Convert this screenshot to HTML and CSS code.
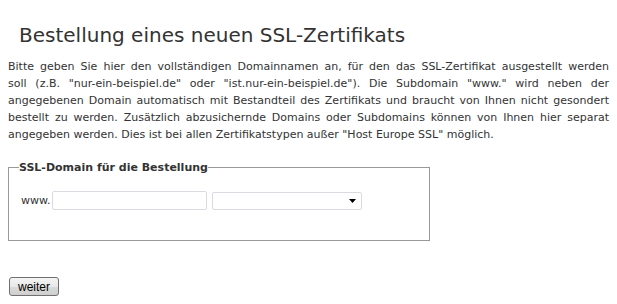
FILE: index.html
```html
<!DOCTYPE html>
<html lang="de">
<head>
  <meta charset="UTF-8" />
  <title>Bestellung eines neuen SSL-Zertifikats</title>
  <link rel="stylesheet" href="styles.css">
</head>
<body>

<h1>Bestellung eines neuen SSL-Zertifikats</h1>

<p class="intro">
  <span class="line">Bitte geben Sie hier den vollständigen Domainnamen an, für den das SSL-Zertifikat ausgestellt werden</span>
  <span class="line">soll (z.B. "nur-ein-beispiel.de" oder "ist.nur-ein-beispiel.de"). Die Subdomain "www." wird neben der</span>
  <span class="line">angegebenen Domain automatisch mit Bestandteil des Zertifikats und braucht von Ihnen nicht gesondert</span>
  <span class="line">bestellt zu werden. Zusätzlich abzusichernde Domains oder Subdomains können von Ihnen hier separat</span>
  <span class="line last">angegeben werden. Dies ist bei allen Zertifikatstypen außer "Host Europe SSL" möglich.</span>
</p>

<form>
  <fieldset class="domain-box">
    <legend>SSL-Domain für die Bestellung</legend>
    <div class="domain-row">
      <label for="domain">www.</label>
      <input type="text" id="domain" class="domain-input">
      <select id="tld" class="tld-select">
        <option value=""></option>
      </select>
    </div>
  </fieldset>

  <button type="button" class="btn">weiter</button>
</form>

</body>
</html>
```

FILE: styles.css
```css
body {
  margin: 0;
  padding: 8px;
  font-family: "DejaVu Sans", Verdana, sans-serif;
  font-size: 11px;
  color: #333;
  background: #fff;
}
h1 {
  margin: 15px 0 0 11px;
  font-size: 20px;
  line-height: 24px;
  font-weight: normal;
  color: #333;
}
.intro {
  margin: 11px 0 0;
  line-height: 17px;
}
.intro .line {
  display: block;
  text-align: justify;
  text-align-last: justify;
}
.intro .line.last {
  text-align-last: left;
}
.domain-box {
  width: 422px;
  box-sizing: border-box;
  margin: 16px 0 0;
  padding: 15px 12px 30px;
  border: 1px solid #999;
}
.domain-box legend {
  margin-left: -2px;
  padding: 0;
  font-weight: bold;
  line-height: 17px;
}
.domain-row {
  display: flex;
  align-items: center;
}
.domain-row label {
  margin-right: 2px;
}
.domain-input,
.tld-select {
  box-sizing: border-box;
  height: 19px;
  border: 1px solid #dadae0;
  border-radius: 2px;
  background: #fff;
  font-family: "DejaVu Sans", Verdana, sans-serif;
  font-size: 11px;
  padding: 0 3px;
}
.domain-input {
  width: 155px;
}
.tld-select {
  width: 150px;
  height: 18px;
  margin-left: 5px;
  appearance: none;
  background: #fff url("data:image/svg+xml,%3Csvg xmlns='http://www.w3.org/2000/svg' width='7' height='4'%3E%3Cpath d='M0 0h7L3.5 4z' fill='%23000'/%3E%3C/svg%3E") no-repeat right 5px center;
}
.btn {
  display: block;
  margin: 36px 0 0 1px;
  width: 50px;
  height: 19px;
  padding: 0;
  font-family: "Liberation Sans", Arial, sans-serif;
  font-size: 12px;
  color: #000;
  border: 1px solid #707070;
  border-radius: 3px;
  background: linear-gradient(#f4f4f4, #e8e8e8 50%, #dadada 51%, #cfcfcf);
  cursor: pointer;
}
```
